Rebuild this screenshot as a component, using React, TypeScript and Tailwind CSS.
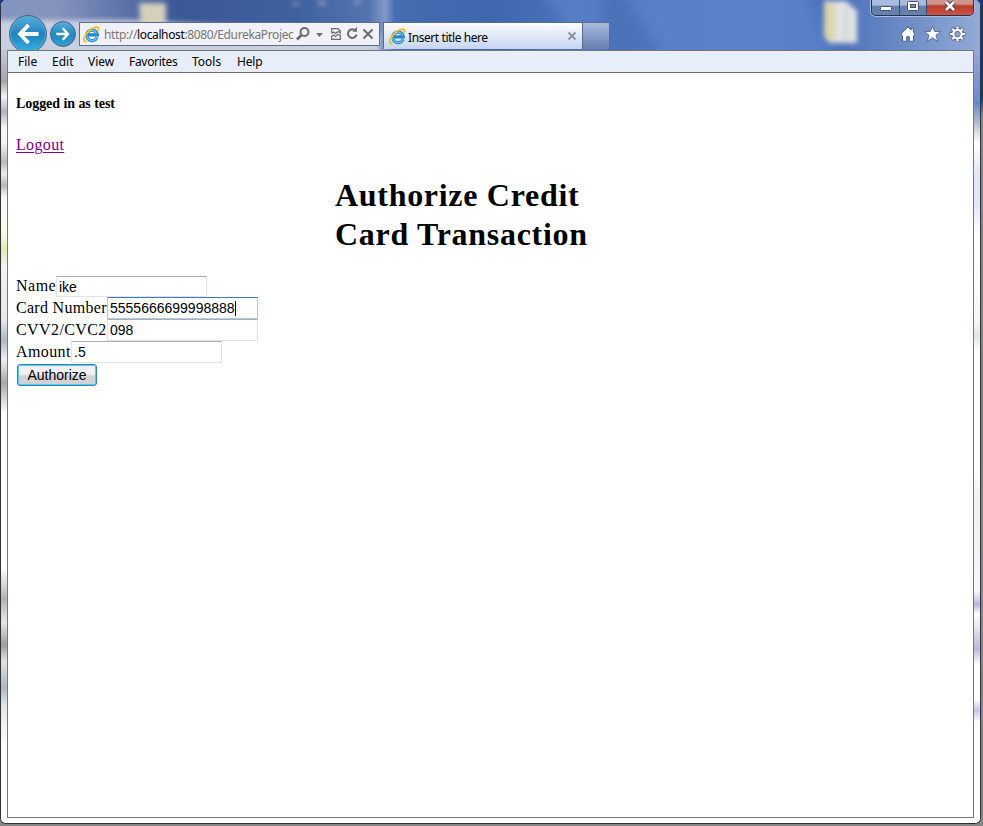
import React from "react";

const ui = "font-['Noto_Sans','Open_Sans',sans-serif]";

function IeLogo() {
  return (
    <svg width="17" height="17" viewBox="0 0 17 17" className="shrink-0">
      <path d="M14 11.2A5.3 5.3 0 1 1 14.3 8.9H5" fill="none" stroke="#2786c4" strokeWidth="3.2" />
      <path d="M13.6 11.6A5.1 5.1 0 0 1 3.9 9.4M4 7.6A5 5 0 0 1 13.4 7.4" fill="none" stroke="#6bc4ec" strokeWidth="1.3" />
      <path d="M3.4 15.6C-1.6 15.6 1.4 8 7.4 3.6 12.4.2 17 .2 15.2 4.6" fill="none" stroke="#efb913" strokeWidth="1.7" />
      <path d="M1.8 14.2C1 11.8 3.8 7.2 7.8 4.2" fill="none" stroke="#ffe06a" strokeWidth=".7" />
    </svg>
  );
}

function NavArrow({ flip, size }: { flip?: boolean; size: number }) {
  return (
    <svg width={size} height={size} viewBox="0 0 22 22" className={flip ? "-scale-x-100" : ""}>
      <path d="M11.5 2 3 11l8.5 9M3.5 11H21.500" fill="none" stroke="#fff" strokeWidth="3.8" />
    </svg>
  );
}

function Backdrop() {
  return (
    <svg width="979" height="50" viewBox="1 0 979 50" className="absolute inset-x-0 top-0" preserveAspectRatio="none">
      <defs>
        <linearGradient id="sky" x1="0" x2="1">
          <stop offset="0" stopColor="#8395bf" />
          <stop offset=".06" stopColor="#8493bc" />
          <stop offset=".12" stopColor="#6076aa" />
          <stop offset=".18" stopColor="#3c5896" />
          <stop offset=".3" stopColor="#3f609f" />
          <stop offset=".375" stopColor="#5474b0" />
          <stop offset=".392" stopColor="#8199c8" />
          <stop offset=".402" stopColor="#456db2" />
          <stop offset=".5" stopColor="#4067ae" />
          <stop offset=".6" stopColor="#4c74bd" />
          <stop offset=".78" stopColor="#5a83c8" />
          <stop offset=".85" stopColor="#4970b8" />
          <stop offset="1" stopColor="#94abd6" />
        </linearGradient>
        <filter id="soft" x="-50%" y="-50%" width="200%" height="200%"><feGaussianBlur stdDeviation="2.5" /></filter>
        <filter id="wide" x="-20%" y="-100%" width="140%" height="300%"><feGaussianBlur stdDeviation="7" /></filter>
      </defs>
      <rect width="983" height="50" fill="url(#sky)" />
      <path d="M-10 20H130L380 34V60H-10Z" fill="#c8cfe1" filter="url(#soft)" />
      <path d="M530 -30h260l60 110H600Z" fill="#5c84ca" opacity=".7" filter="url(#wide)" />
      <path d="M600 -20h18l50 90h-68Z" fill="#3e66ad" opacity=".5" filter="url(#wide)" />
      <path d="M139 3h27v34h-25Z" fill="#d3d0bb" filter="url(#soft)" />
      <g fill="#a1adc1" opacity=".55" filter="url(#soft)"><path d="M292 2h7v4h-7zM318 0h8v6h-8zM354 0h7v5h-7z" /></g>
      <g filter="url(#soft)">
        <path d="M824 1h22l11 10v32h-28l-5-7Z" fill="#e1e3e4" />
        <path d="M824 3h11v38h-6l-5-5Z" fill="#dcd7aa" />
        <path d="M846 8v32" stroke="#c3c9d1" strokeWidth="2" />
      </g>
    </svg>
  );
}

function CaptionButtons() {
  const shade = "h-full flex justify-center bg-linear-to-b from-[#a9bce0] from-35% to-[#6680ad] to-40% border-[#374d74]";
  return (
    <div className="ml-auto flex h-4 w-[103px] overflow-hidden rounded-b-[5px] border border-t-0 border-[#26334c] shadow-[0_0_0_1px_#a9bce0]">
      <div className={`${shade} w-[28px] border-r`}>
        <svg width="14" height="14"><rect x="1.5" y="6.5" width="11" height="4" rx="1" fill="#fff" stroke="#4b5262" /></svg>
      </div>
      <div className={`${shade} w-[27px] border-r`}>
        <svg width="14" height="14"><rect x="1.5" y="1.5" width="11" height="9" rx="1" fill="#fff" stroke="#4b5262" /><rect x="4.5" y="4.5" width="5" height="3" fill="#758cb8" stroke="#4b5262" /></svg>
      </div>
      <div className="flex h-full flex-1 justify-center bg-linear-to-b from-[#cf9690] from-25% via-[#b93d2c] via-40% to-[#cc5442]">
        <svg width="14" height="14"><path d="m3 2 8 8m0-8-8 8" stroke="#49404a" strokeWidth="4.6" /><path d="m3 2 8 8m0-8-8 8" stroke="#fff" strokeWidth="2.6" /></svg>
      </div>
    </div>
  );
}

function CommandIcons() {
  return (
    <div className="mt-[10px] flex gap-2 pr-[8px]">
      <svg width="16" height="16" viewBox="0.5 0 16 16"><path d="M8.5.8 1.2 8.2 3 9.800V15.300h4.200v-4.500h2.600v4.500H14V9.800l1.800-1.600-2-2V2h-2.200v1.900Z" fill="#fff" stroke="#475d8a" strokeWidth="1" /></svg>
      <svg width="17" height="16" viewBox="0 0 17 16"><path d="m8.5.3 2.200 5.200h5.800l-4.500 3.700 1.700 6.100-5.200-3.600-5.200 3.600L5 9.200.5 5.500h5.800Z" fill="#fff" stroke="#475d8a" strokeWidth=".8" /></svg>
      <svg width="17" height="16" viewBox="-.5 0 17 16">
        <g fill="none" stroke="#475d8a"><circle cx="8" cy="8" r="4.500" strokeWidth="4" /><path d="M8 0v4M8 12v4M0 8h4M12 8h4M2.3 2.3l3 3M10.7 10.7l3 3M13.7 2.3l-3 3M5.3 10.7l-3 3" strokeWidth="3.6" /></g>
        <g fill="none" stroke="#fff"><circle cx="8" cy="8" r="4.2" strokeWidth="2.2" /><path d="M8 .5v3M8 12.500v3M.5 8h3M12.500 8h3M2.700 2.700l2 2M11.300 11.300l2 2M13.300 2.700l-2 2M4.700 11.300l-2 2" strokeWidth="2.2" /></g>
      </svg>
    </div>
  );
}

function AddressBar() {
  return (
    <div className={`mt-[22px] ml-[3px] flex h-6 w-[301px] items-center border border-[#5f6e8c] bg-[#f0f2f8] pl-[3px] text-[12px] ${ui}`}>
      <IeLogo />
      <div className="ml-[4px] mt-px w-[189px] whitespace-nowrap text-[#777] tracking-[-0.37px]">
        http://<span className="text-black">localhost</span>:8080/EdurekaProjec
      </div>
      <svg width="80" height="18" viewBox="0 0 80 18" className="ml-[3px]" fill="none" stroke="#6c6c6c" strokeWidth="2">
        <circle cx="8.500" cy="7" r="4" /><path d="m5.500 10-4.500 4.500" strokeWidth="2.8" />
        <path d="M20 8h7l-3.5 4Z" fill="#6c6c6c" stroke="none" />
        <path d="M35.600 7.500V3.600h6.400l2.400 2.400V8l-2.400-1.500-2.400 2-2-1.500-2 1.500M35.600 11v3.400h8.800v-4l-2.400-1-2.400 2-2-1.500-2 1.500" strokeWidth="1.2" />
        <path d="M58.500 5A4.300 4.300 0 1 0 60.500 9.500" /><path d="M56.500 6.800H61V1.800Z" fill="#6c6c6c" stroke="none" />
        <path d="m67.500 4.500 9 9m0-9-9 9" />
      </svg>
    </div>
  );
}

function Chrome() {
  return (
    <header className="relative h-[50px] overflow-hidden">
      <Backdrop />
      <div className="relative flex h-full items-start">
        <div className="mt-[15px] ml-[8px] flex h-[38px] w-[38px] shrink-0 items-center justify-center rounded-full border border-[#50627f] bg-linear-to-b from-[#5aaeda] via-[#1c83bd] to-[#36b2e4] pr-px shadow-[inset_0_0_1px_1px_#4fadd8]"><NavArrow size={22} /></div>
        <div className="mt-[21px] ml-[3px] flex h-[26px] w-[26px] shrink-0 items-center justify-center rounded-full border border-[#50627f] bg-linear-to-b from-[#5aaeda] via-[#1f88c2] to-[#309fd4]"><NavArrow size={14} flip /></div>
        <AddressBar />
        <div className={`mt-[22px] ml-[3px] flex h-[27px] w-[200px] items-center border border-b-0 border-[#5b6b89] bg-linear-to-b from-[#fcfdff] to-[#c5d5f0] pl-[5px] pr-[5px] text-[12px] text-black ${ui}`}>
          <IeLogo />
          <span className="mt-[3px] ml-[2px] flex-1 whitespace-nowrap tracking-[-0.42px]">Insert title here</span>
          <svg width="10" height="10"><path d="m1.5 1.5 7 7m0-7-7 7" stroke="#8e929c" strokeWidth="2" /></svg>
        </div>
        <div className="mt-[22px] h-[27px] w-[27px] border border-b-0 border-l-0 border-[#5b6b89] bg-linear-to-b from-[#a9bce0] to-[#677fab]" />
        <div className="ml-auto flex flex-col items-end pr-[6px]">
          <CaptionButtons />
          <CommandIcons />
        </div>
      </div>
    </header>
  );
}

function MenuBar() {
  return (
    <nav className={`flex h-[22px] items-center border-b border-[#707275] bg-[#e7eef9] pl-[10px] text-[12px] text-black ${ui}`}>
      <span className="w-[34px]">File</span>
      <span className="w-[36px]">Edit</span>
      <span className="w-[41px]">View</span>
      <span className="w-[63px] tracking-[-0.3px]">Favorites</span>
      <span className="w-[45px]">Tools</span>
      <span className="tracking-[-0.2px]">Help</span>
    </nav>
  );
}

type FieldProps = { label: string; value: string; labelClass: string; rowClass?: string; focused?: boolean };

function Field({ label, value, labelClass, rowClass = "h-[22px] leading-[22px]", focused }: FieldProps) {
  return (
    <label className={`flex ${rowClass}`}>
      <span className={labelClass}>{label}</span>
      <span className={`flex w-[151px] items-center border bg-white pl-[2px] font-['Liberation_Sans',Arial,sans-serif] text-[14px] ${focused ? "rounded-[1px] border-[#a9cbe4] border-t-[#3d7bad]" : "border-[#e2e3ea] border-t-[#abadb3]"}`}>
        {value}
        {focused && <i className="h-[15px] w-px bg-black" />}
      </span>
    </label>
  );
}

function Page() {
  return (
    <main className="flex-1 bg-white pl-[8px] font-['Liberation_Serif','Times_New_Roman',serif] text-[16px] text-black">
      <h4 className="pt-[22px] text-[14px] leading-[18px] font-bold tracking-[-0.06px]">Logged in as test</h4>
      <a className="mt-[22px] block leading-[20px] tracking-[0.35px] text-[#800080] underline underline-offset-2">Logout</a>
      <h1 className="mt-[21px] ml-[319px] w-[290px] text-[32px] leading-[39px] font-bold tracking-[0.7px]">Authorize Credit Card Transaction</h1>
      <form className="mt-[22px]">
        <Field label="Name" value="ike" labelClass="w-[40px] tracking-[0.5px]" rowClass="h-[21px] leading-[20px]" />
        <Field label="Card Number" value="5555666699998888" labelClass="w-[91px] tracking-[0.3px]" focused />
        <Field label="CVV2/CVC2" value="098" labelClass="w-[91px] tracking-[0.4px]" />
        <Field label="Amount" value=".5" labelClass="w-[55px] tracking-[0.4px]" />
        <button type="button" className="mt-px ml-px block h-[22px] w-[80px] rounded-[3px] border border-[#3c7fb1] bg-linear-to-b from-[#f1f1f1] from-45% to-[#d2d2d2] to-55% font-['Liberation_Sans',Arial,sans-serif] text-[14px] leading-[19px] shadow-[inset_0_0_0_1px_#48d0f4]">Authorize</button>
      </form>
    </main>
  );
}

export default function App() {
  return (
    <div className="flex h-[826px] w-[983px] bg-linear-to-b from-[#153976] from-12% to-[#858585] to-14%">
      <div className="flex h-[824px] w-[981px] flex-col overflow-hidden rounded-[6px] border border-t-0 border-[#303238] bg-white">
        <Chrome />
        <div className="flex flex-1">
          <div className="w-[6px] bg-[linear-gradient(#c3c8d8_0,#a7a4ad_4%,#f2f2f3_6%,#b0b5c2_8%,#f4f4f5_10%,#f4f4f5_12%,#b9b8bd_14.5%,#eee_16%,#b9b8bd_17.5%,#f8f8f8_19%,#fbfae9_24%,#e4e8b0_25.6%,#f4f3f4_28%,#e8e6ea_35%,#adb8c9_37.5%,#f0f0f1_40%,#aaa7aa_43%,#fff_47%,#fff_67%,#b3b1b5_71%,#e8e8e8_74%,#9e9ba2_77%,#e2e2e5_79%,#afb6c1_82.5%,#e8e8e8_85%,#fcfcfc_90%)]" />
          <div className="flex h-[768px] w-[967px] flex-col border border-[#777]">
            <MenuBar />
            <Page />
          </div>
          <div className="flex-1 bg-[linear-gradient(#91aadb_0,#658bcb_7%,#b5c0ce_9.5%,#fff_12%,#e2e7f5_16%,#e2e7f5_20%,#fff_24%,#f6f8f8_35%,#dfe8df_37%,#fff_39%,#fff_54%,#f0f1f3_58%,#f7f7fb_70%,#bdb6dc_71.7%,#fff_73%,#d4cfe5_76%,#bdb6dc_77.5%,#fff_79.5%,#fff_84%,#c9c2ea_85.4%,#fff_87%)]" />
        </div>
      </div>
    </div>
  );
}
